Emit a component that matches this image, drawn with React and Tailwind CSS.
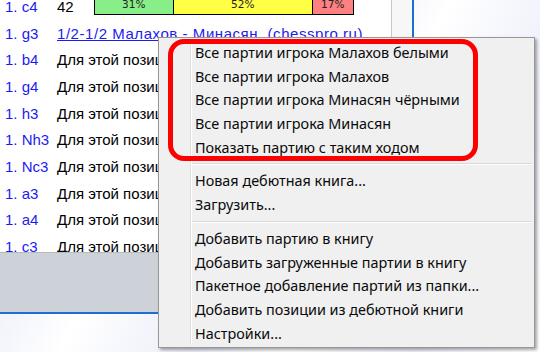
const moves = [
  "1. b4",
  "1. g4",
  "1. h3",
  "1. Nh3",
  "1. Nc3",
  "1. a3",
  "1. a4",
  "1. c3",
];

const menuGroups = [
  [
    "Все партии игрока Малахов белыми",
    "Все партии игрока Малахов",
    "Все партии игрока Минасян чёрными",
    "Все партии игрока Минасян",
    "Показать партию с таким ходом",
  ],
  ["Новая дебютная книга...", "Загрузить..."],
  [
    "Добавить партию в книгу",
    "Добавить загруженные партии в книгу",
    "Пакетное добавление партий из папки...",
    "Добавить позиции из дебютной книги",
    "Настройки...",
  ],
];

function StatBar() {
  return (
    <div className="flex h-[21px] self-start ml-[20px] border border-black font-['DejaVu_Sans',sans-serif] text-[10.5px] text-[#222]">
      <div className="w-[79px] bg-[#88ee88] border-r border-black flex items-end justify-center pb-[1px]">31%</div>
      <div className="w-[139px] bg-[#ffff44] border-r border-black flex items-end justify-center pb-[1px]">52%</div>
      <div className="w-[40px] bg-[#ff8080] flex items-end justify-center pb-[1px]">17%</div>
    </div>
  );
}

function ContextMenu() {
  return (
    <div className="absolute left-[158px] top-[37px] w-[377px] bg-[#f0f0f0] border border-[#979797] shadow-[2px_2px_3px_rgba(0,0,0,0.35)] pt-[3px] pb-[2px] font-['Noto_Sans',sans-serif] text-[14.4px] text-[#0a0a0a]">
      <div className="absolute left-[31px] top-[2px] bottom-[2px] w-[2px] border-l border-[#e0e0e0] border-r border-r-white" />
      {menuGroups.map((group, gi) => (
        <div key={gi}>
          {gi > 0 && (
            <div className="h-[10px] flex items-center pl-[32px] pr-[2px]">
              <div className="w-full h-[2px] border-t border-[#d9d9d9] border-b border-b-white" />
            </div>
          )}
          {group.map((item) => (
            <div key={item} className="h-[23.7px] flex items-center pl-[36px] whitespace-nowrap">
              {item}
            </div>
          ))}
        </div>
      ))}
    </div>
  );
}

export default function App() {
  return (
    <div className="relative w-[540px] h-[352px] overflow-hidden bg-[linear-gradient(115deg,#ffffff_0%,#eef0fb_18%,#ffffff_32%,#eceefa_50%,#ffffff_64%,#eef0fb_82%,#ffffff_100%)]">
      <div className="w-[414px] h-[314px] flex flex-col border-r-2 border-b-2 border-[#1a6fd0] bg-white">
        <div className="flex h-[252px]">
          <div className="w-[392px] h-full overflow-hidden border-r border-[#c8c8c8] bg-white font-['Liberation_Sans',sans-serif] text-[15px]">
            <div className="-mt-[6px]">
              <div className="h-[26.67px] flex items-center">
                <span className="w-[57px] pl-[5px] text-[#1c1cf0]">1. c4</span>
                <span className="text-black">42</span>
                <StatBar />
              </div>
              <div className="h-[26.67px] flex items-center">
                <span className="w-[57px] pl-[5px] text-[#1c1cf0]">1. g3</span>
                <span className="text-[#1c1cf0] underline whitespace-pre tracking-[0.55px]">1/2-1/2 Малахов - Минасян  (chesspro.ru)</span>
              </div>
              {moves.map((m) => (
                <div key={m} className="h-[26.67px] flex items-center whitespace-nowrap">
                  <span className="w-[57px] shrink-0 pl-[5px] text-[#1c1cf0]">{m}</span>
                  <span className="text-black">Для этой позиции нет партий</span>
                </div>
              ))}
            </div>
          </div>
          <div className="flex-1 bg-[#f7f7f7]" />
        </div>
        <div className="flex-1 bg-[#cdd1d8] border-t border-[#b5b9c0]" />
      </div>

      <ContextMenu />

      <div className="absolute left-[168px] top-[39px] w-[310px] h-[122px] border-[5px] border-[#ff0000] rounded-[16px]" />
    </div>
  );
}
